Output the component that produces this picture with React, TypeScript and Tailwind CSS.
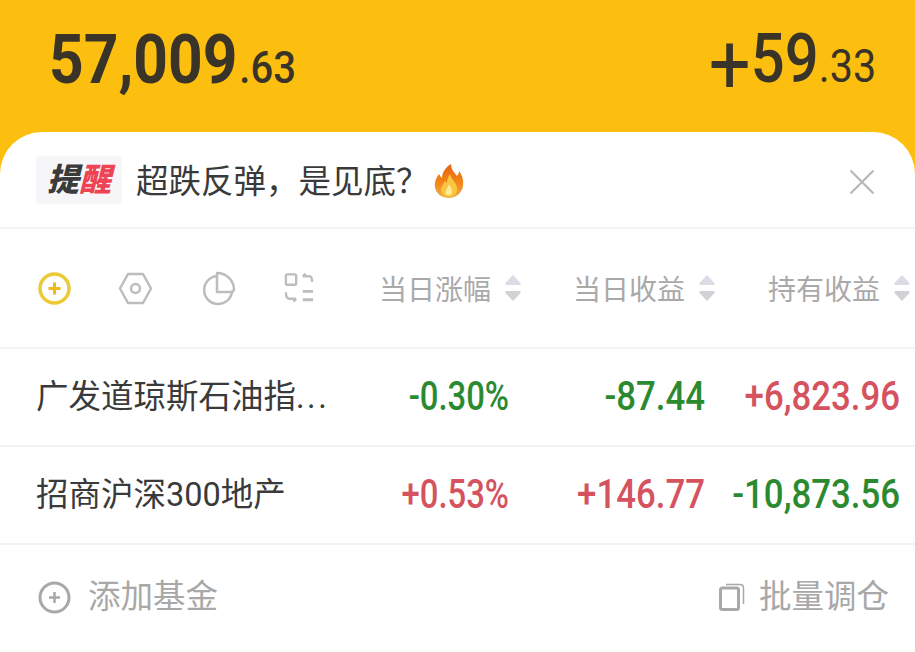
const cjk = "font-['Roboto','Noto_Sans_CJK_SC',sans-serif]";

const SortIcon = () => (
  <svg width="18" height="30" viewBox="0 0 18 30" className="shrink-0">
    <path d="M9 2 L16.5 10 Q17 12 15.5 12 H2.5 Q1 12 1.5 10 Z" fill="#dcdce6" />
    <path d="M2.5 18 H15.5 Q17 18 16.5 20 L9 28 L1.5 20 Q1 18 2.5 18 Z" fill="#d2d2d6" />
  </svg>
);

const HeaderCol = ({ label, width }: { label: string; width: string }) => (
  <div className={`${width} flex items-center justify-end gap-[13px] text-[28px] leading-none text-[#a9a9a9]`}>
    <span className="pt-[6px]">{label}</span>
    <SortIcon />
  </div>
);

const Num = ({ value, up, className }: { value: string; up: boolean; className: string }) => (
  <div className={`${className} shrink-0 origin-right text-right text-[40px] leading-none font-medium ${up ? 'text-[#d4535f]' : 'text-[#2b8a30]'}`}>
    {value}
  </div>
);

const FundRow = ({ name, more, pct, day, hold }: { name: string; more?: boolean; pct: string; day: string; hold: string }) => (
  <div className="flex h-[98px] items-center border-b-2 border-[#f3f3f3] pl-[36px] pr-[15px]">
    <div className="min-w-0 flex-1 whitespace-nowrap text-[32.5px] leading-none text-[#3a3a3a]">
      {name}
      {more && <span className="tracking-[2.5px]">...</span>}
    </div>
    <Num value={pct} up={pct.startsWith('+')} className="w-[180px] scale-x-[.82]" />
    <Num value={day} up={day.startsWith('+')} className="w-[196px] scale-x-[.87]" />
    <Num value={hold} up={hold.startsWith('+')} className="w-[195px] scale-x-[.87]" />
  </div>
);

export default function App() {
  return (
    <div className={`flex h-[652px] w-[915px] flex-col overflow-hidden bg-[#fdbf0f] ${cjk}`}>
      {/* total + today */}
      <div className="flex h-[132px] items-start justify-between pl-[49px] pr-[39px] pt-[26px] text-[#3a3428]">
        <div className="flex origin-left scale-x-[.89] items-baseline">
          <span className="text-[68px] leading-none font-bold">57,009</span>
          <span className="ml-[2px] text-[45px] leading-none font-medium">.63</span>
        </div>
        <div className="-mt-[14px] flex origin-right scale-x-[.88] items-baseline">
          <span className="inline-block translate-y-[11px] text-[84px] leading-none">+</span>
          <span className="text-[68px] leading-none font-medium">59</span>
          <span className="text-[47px] leading-none">.33</span>
        </div>
      </div>

      <div className="flex-1 rounded-t-[42px] bg-white">
        {/* notice */}
        <div className="flex h-[97px] items-center border-b-2 border-[#f3f3f3] pl-[36px] pr-[40px]">
          <div className="flex h-[48px] w-[86px] items-center justify-center rounded-[3px] bg-[#f6f6f8] text-[32px] leading-none font-black italic">
            <span className="text-[#3b3b3b]">提</span>
            <span className="text-[#ee4355]">醒</span>
          </div>
          <div className="ml-[14px] pt-[6px] text-[32.5px] leading-none text-[#3a3a3a]">超跌反弹，是见底？</div>
          <svg width="32" height="36" viewBox="0 0 32 36" className="ml-[4px] mt-[2px]">
            <defs>
              <linearGradient id="flame" x1="0" y1="0" x2="0" y2="1">
                <stop offset="0" stopColor="#e8620f" />
                <stop offset="0.6" stopColor="#f28a1c" />
                <stop offset="1" stopColor="#e9b24a" />
              </linearGradient>
            </defs>
            <path d="M18 1 C18 7 22 10 24 13 C25 12 26 10 26 8 C29 12 31 17 30 23 C29 30 23 35 16 35 C9 35 3 31 2 24 C1 19 4 14 6 11 C7 13 8 14 9 15 C9 9 13 4 18 1 Z" fill="url(#flame)" />
            <path d="M17 11 C18 17 25 20 24 27 C23 32 20 34 16 34 C11 34 8 31 8 27 C8 23 11 21 12 18 C13 19 14 20 14 20 C14 17 15 14 17 11 Z" fill="#fbc63f" />
            <path d="M16 21 C17 24 20 26 19 30 C18 33 13 33 12.5 30 C12 27 15 25 16 21 Z" fill="#fdeb93" />
          </svg>
          <svg width="26" height="26" viewBox="0 0 26 26" className="ml-auto mt-[4px]" stroke="#b8b8b8" strokeWidth="2.2" fill="none">
            <path d="M1.5 1.5 L24.5 24.5 M24.5 1.5 L1.5 24.5" />
          </svg>
        </div>

        {/* column headers */}
        <div className="flex h-[120px] items-center border-b-2 border-[#f3f3f3] pl-[37px] pr-[4px]">
          <div className="flex flex-1 items-center gap-[46px]">
            <svg width="35" height="35" viewBox="0 0 35 35" fill="none">
              <circle cx="17.5" cy="17.5" r="14.5" stroke="#ecc936" strokeWidth="3.5" />
              <path d="M11.5 17.5 H23.5 M17.5 11.5 V23.5" stroke="#f2b91c" strokeWidth="3" />
            </svg>
            <svg width="35" height="35" viewBox="0 0 35 35" fill="none" stroke="#bdbdbd" strokeWidth="2.5">
              <path d="M10 3 H25 L33 17.5 L25 32 H10 L2 17.5 Z" strokeLinejoin="round" />
              <circle cx="17.5" cy="17.5" r="4.5" />
            </svg>
            <svg width="35" height="35" viewBox="0 0 35 35" fill="none" stroke="#bdbdbd" strokeWidth="2.5" className="ml-[3px]">
              <path d="M15 5 A14 14 0 1 0 30 21 H15 Z" strokeLinejoin="round" />
              <path d="M15 5 V2 A17 17 0 0 1 32 19 L30 21" strokeLinejoin="round" />
            </svg>
            <svg width="30" height="32" viewBox="0 0 32 33" fill="none" stroke="#bdbdbd" strokeWidth="2.5" className="ml-[1px]">
              <rect x="2" y="2" width="11" height="11" rx="1.5" />
              <path d="M20 4 H27 Q30 4 30 10 M20 4 L23 1" />
              <path d="M2 21 Q2 28 6 28 H13 M13 28 L10 31" />
              <path d="M20 20 H31 M20 29 H31" strokeWidth="3" />
            </svg>
          </div>
          <HeaderCol label="当日涨幅" width="w-[175px]" />
          <HeaderCol label="当日收益" width="w-[194px]" />
          <HeaderCol label="持有收益" width="w-[195px]" />
        </div>

        <FundRow name="广发道琼斯石油指" more pct="-0.30%" day="-87.44" hold="+6,823.96" />
        <FundRow name="招商沪深300地产" pct="+0.53%" day="+146.77" hold="-10,873.56" />

        {/* footer actions */}
        <div className="flex h-[104px] items-center justify-between pl-[38px] pr-[26px] text-[32.5px] leading-none text-[#a8a8a8]">
          <div className="flex items-center gap-[17px]">
            <svg width="33" height="33" viewBox="0 0 33 33" fill="none" stroke="#a8a8a8">
              <circle cx="16.5" cy="16.5" r="14.5" strokeWidth="3" />
              <path d="M11 16.5 H22 M16.5 11 V22" strokeWidth="2.5" />
            </svg>
            <span>添加基金</span>
          </div>
          <div className="flex items-center gap-[14px]">
            <svg width="26" height="28" viewBox="0 0 26 28" fill="none" stroke="#a8a8a8">
              <rect x="1.5" y="5" width="18" height="21.5" rx="2" strokeWidth="3" />
              <path d="M7 1.5 H21 Q24.5 1.5 24.5 5 V21" strokeWidth="1.5" />
            </svg>
            <span>批量调仓</span>
          </div>
        </div>
      </div>
    </div>
  );
}
